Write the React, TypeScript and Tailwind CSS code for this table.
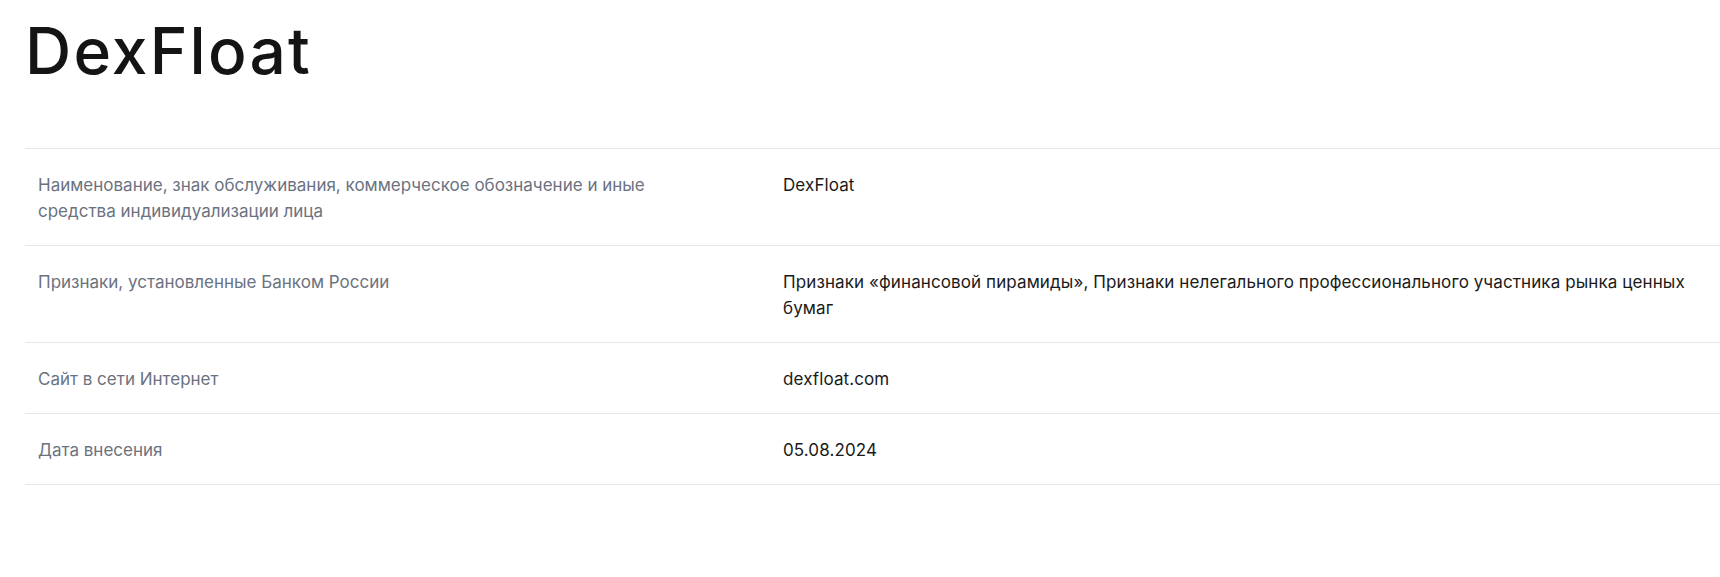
import React from "react";

const rows: { label: React.ReactNode; value: React.ReactNode }[] = [
  {
    label: (
      <>
        Наименование, знак обслуживания, коммерческое обозначение и иные
        <br />
        средства индивидуализации лица
      </>
    ),
    value: "DexFloat",
  },
  {
    label: "Признаки, установленные Банком России",
    value: (
      <>
        Признаки «финансовой пирамиды», Признаки нелегального профессионального участника рынка ценных
        <br />
        бумаг
      </>
    ),
  },
  { label: "Сайт в сети Интернет", value: "dexfloat.com" },
  { label: "Дата внесения", value: "05.08.2024" },
];

export default function App() {
  return (
    <div className="min-h-[577px] bg-white pl-[25px]" style={{ fontFamily: "Inter, 'Noto Sans', sans-serif" }}>
      <h1 className="pt-[12px] text-[64px] font-medium leading-[78px] tracking-[2.2px] text-[#141414]">
        DexFloat
      </h1>
      <div className="mt-[58px] border-b border-[#e6e6e6]">
        {rows.map((r, i) => (
          <div key={i} className="grid grid-cols-[745px_1fr] border-t border-[#e6e6e6]">
            <div className="pl-[13px] pt-[23px] pb-[21px] text-[17px] leading-[26px] text-[#6b7280]">{r.label}</div>
            <div className="pl-[13px] pt-[23px] pb-[21px] text-[17px] leading-[26px] tracking-[0.1px] text-[#1a1a1a]">{r.value}</div>
          </div>
        ))}
      </div>
    </div>
  );
}
